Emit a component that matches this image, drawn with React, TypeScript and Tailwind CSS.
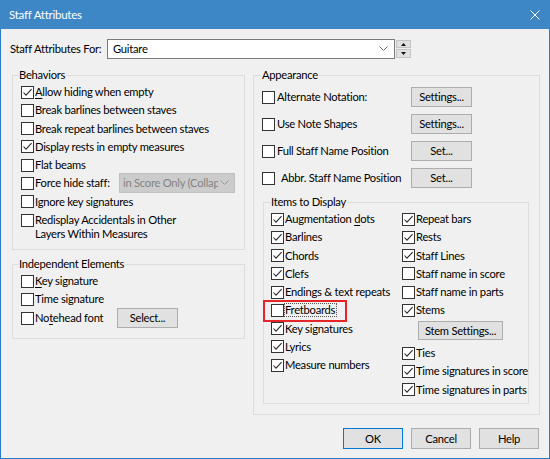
import React from "react";

const Box = ({ checked }: { checked?: boolean }) => (
  <span className="w-[13px] h-[13px] border border-[#333333] bg-white flex items-center justify-center shrink-0">
    {checked && (
      <svg width="11" height="11" viewBox="0 0 11 11">
        <path d="M1.5 5.5 L4 8.2 L9.6 2.2" fill="none" stroke="#2a2a2a" strokeWidth="1.1" />
      </svg>
    )}
  </span>
);

const Row = ({
  checked,
  children,
  h = "h-[18.25px]",
}: {
  checked?: boolean;
  children: React.ReactNode;
  h?: string;
}) => (
  <div className={`flex items-center gap-[1px] ${h}`}>
    <Box checked={checked} />
    <span className="whitespace-nowrap">{children}</span>
  </div>
);

const Btn = ({ children, cls }: { children: React.ReactNode; cls: string }) => (
  <div className={`flex items-center justify-center whitespace-nowrap bg-[#e1e1e1] border border-[#adadad] ${cls}`}>
    {children}
  </div>
);

const U = ({ children }: { children: React.ReactNode }) => <span className="underline underline-offset-2">{children}</span>;

export default function App() {
  return (
    <div className="w-[550px] h-[459px] flex flex-col bg-[#f0f0f0] text-[11.2px] tracking-[-0.25px] leading-[16px] text-black font-['Lato',sans-serif] overflow-hidden">
      <div className="h-[29px] shrink-0 bg-[#3d87c7] flex items-center justify-between pl-[9px] pr-[10px] text-white text-[11.5px]">
        <span>Staff Attributes</span>
        <svg width="10" height="10" viewBox="0 0 10 10">
          <path d="M0.5 0.5 L9.5 9.5 M9.5 0.5 L0.5 9.5" stroke="white" strokeWidth="1" />
        </svg>
      </div>
      <div className="flex-1 flex flex-col border-x border-b border-[#2b7bc5] pl-[9px] pr-[9px]">
        {/* combo row */}
        <div className="flex items-center mt-[10px] h-[20px]">
          <span className="w-[97px] whitespace-nowrap">Staff Attributes For:</span>
          <div className="w-[288px] h-[20px] bg-white border border-[#7a7a7a] flex items-center justify-between pl-[5px] pr-[6px]">
            <span>Guitare</span>
            <svg width="9" height="6" viewBox="0 0 9 6">
              <path d="M0.5 0.5 L4.5 4.5 L8.5 0.5" fill="none" stroke="#707070" strokeWidth="1" />
            </svg>
          </div>
          <div className="ml-[1px] w-[15px] h-[18px] flex flex-col gap-[1px]">
            <div className="h-[8px] bg-[#e1e1e1] border border-[#c4c4c4] flex items-center justify-center">
              <svg width="5" height="3" viewBox="0 0 5 3"><path d="M2.5 0 L5 3 L0 3 Z" fill="#111" /></svg>
            </div>
            <div className="h-[9px] bg-[#e1e1e1] border border-[#c4c4c4] flex items-center justify-center">
              <svg width="5" height="3" viewBox="0 0 5 3"><path d="M0 0 L5 0 L2.5 3 Z" fill="#111" /></svg>
            </div>
          </div>
        </div>

        {/* columns */}
        <div className="flex gap-[8px] ml-[2px] mt-[8px]">
          {/* left column */}
          <div className="w-[233px] shrink-0 flex flex-col">
            <fieldset className="h-[183px] border border-[#dcdcdc] p-0 m-0 min-w-0">
              <legend className="ml-[5px] px-[1px] leading-[16px]">Behaviors</legend>
              <div className="pl-[8px] flex flex-col">
                <Row checked><U>A</U>llow hiding when empty</Row>
                <Row>Break barlines between staves</Row>
                <Row>Break repeat barlines between staves</Row>
                <Row checked>Display rests in empty measures</Row>
                <Row>Flat beams</Row>
                <div className="flex items-center gap-[1px] h-[18.25px]">
                  <Box />
                  <span className="w-[83px] whitespace-nowrap">Force hide staff:</span>
                  <div className="w-[116px] h-[20px] -my-[1px] bg-[#cccccc] border border-[#bfbfbf] flex items-center justify-between pl-[3px] pr-[5px] text-[#838383] overflow-hidden">
                    <span className="whitespace-nowrap overflow-hidden">in Score Only (Collap</span>
                    <svg width="9" height="6" viewBox="0 0 9 6" className="shrink-0 ml-[2px]">
                      <path d="M0.5 0.5 L4.5 4.5 L8.5 0.5" fill="none" stroke="#9a9a9a" strokeWidth="1" />
                    </svg>
                  </div>
                </div>
                <Row>Ignore key signatures</Row>
                <div className="flex items-start gap-[1px] pt-[3px]">
                  <Box />
                  <span className="leading-[14px] -mt-[1px]">
                    Redisplay Accidentals in Other
                    <br />
                    Layers Within Measures
                  </span>
                </div>
              </div>
            </fieldset>
            <fieldset className="h-[83px] mt-[6px] border border-[#dcdcdc] p-0 m-0 min-w-0">
              <legend className="ml-[5px] px-[1px] leading-[16px]">Independent Elements</legend>
              <div className="pl-[8px] flex flex-col">
                <Row h="h-[18px]"><U>K</U>ey signature</Row>
                <Row h="h-[18px]">Time signature</Row>
                <div className="flex items-center gap-[1px] h-[20px]">
                  <Box />
                  <span className="w-[81px] whitespace-nowrap">No<U>t</U>ehead font</span>
                  <Btn cls="w-[61px] h-[20px]">Select...</Btn>
                </div>
              </div>
            </fieldset>
          </div>

          {/* right column */}
          <fieldset className="w-[287px] shrink-0 h-[348px] border border-[#dcdcdc] p-0 m-0 min-w-0">
            <legend className="ml-[7px] px-[1px] leading-[16px]">Appearance</legend>
            <div className="pl-[8px] pr-[10px] flex flex-col">
              <div className="flex flex-col gap-[7px] mt-[4px]">
                {[
                  ["Alternate Notation:", "Settings...", ""],
                  ["Use Note Shapes", "Settings...", ""],
                  ["Full Staff Name Position", "Set...", ""],
                  ["Abbr. Staff Name Position", "Set...", "pl-[4px]"],
                ].map(([label, btn, extra]) => (
                  <div key={label} className="flex items-center h-[20px] gap-[2px]">
                    <Box />
                    <span className={`w-[132px] whitespace-nowrap ${extra}`}>{label}</span>
                    <Btn cls="w-[61px] h-[20px]">{btn}</Btn>
                  </div>
                ))}
              </div>
              <fieldset className="h-[210px] mt-[6px] ml-[1px] border border-[#dcdcdc] p-0 m-0 min-w-0">
                <legend className="ml-[6px] px-[1px] leading-[16px]">Items to Display</legend>
                <div className="pl-[7px] flex">
                  <div className="w-[131px] shrink-0 flex flex-col">
                    <Row checked>Augmentation <U>d</U>ots</Row>
                    <Row checked>Barlines</Row>
                    <Row checked>Chords</Row>
                    <Row checked>Clefs</Row>
                    <Row checked>Endings &amp; text repeats</Row>
                    <div className="relative flex items-center gap-[1px] h-[18.25px]">
                      <Box />
                      <span className="outline outline-1 outline-dotted outline-[#555555] leading-[12px] pr-[1px]">Fretboards</span>
                      <div className="absolute left-[-8px] top-[-1px] w-[84px] h-[22px] border-2 border-[#e5252a]" />
                    </div>
                    <Row checked>Key signatures</Row>
                    <Row checked>Lyrics</Row>
                    <Row checked>Measure numbers</Row>
                  </div>
                  <div className="flex-1 flex flex-col">
                    <Row checked>Repeat bars</Row>
                    <Row checked>Rests</Row>
                    <Row checked>Staff Lines</Row>
                    <Row>Staff name in score</Row>
                    <Row>Staff name in parts</Row>
                    <Row checked>Stems</Row>
                    <Btn cls="ml-[16px] mt-[1.5px] w-[85px] h-[19px]">Stem Settings...</Btn>
                    <div className="mt-[4px] flex flex-col">
                      <Row checked>Ties</Row>
                      <Row checked>Time signatures in score</Row>
                      <Row checked>Time signatures in parts</Row>
                    </div>
                  </div>
                </div>
              </fieldset>
            </div>
          </fieldset>
        </div>

        {/* buttons */}
        <div className="flex justify-end gap-[8px] mt-[13px] pr-[1px]">
          <div className="w-[60px] h-[21px] flex items-center justify-center bg-[#e1e1e1] border border-[#0078d7]">OK</div>
          <Btn cls="w-[60px] h-[21px]">Cancel</Btn>
          <Btn cls="w-[60px] h-[21px]">Help</Btn>
        </div>
      </div>
    </div>
  );
}
